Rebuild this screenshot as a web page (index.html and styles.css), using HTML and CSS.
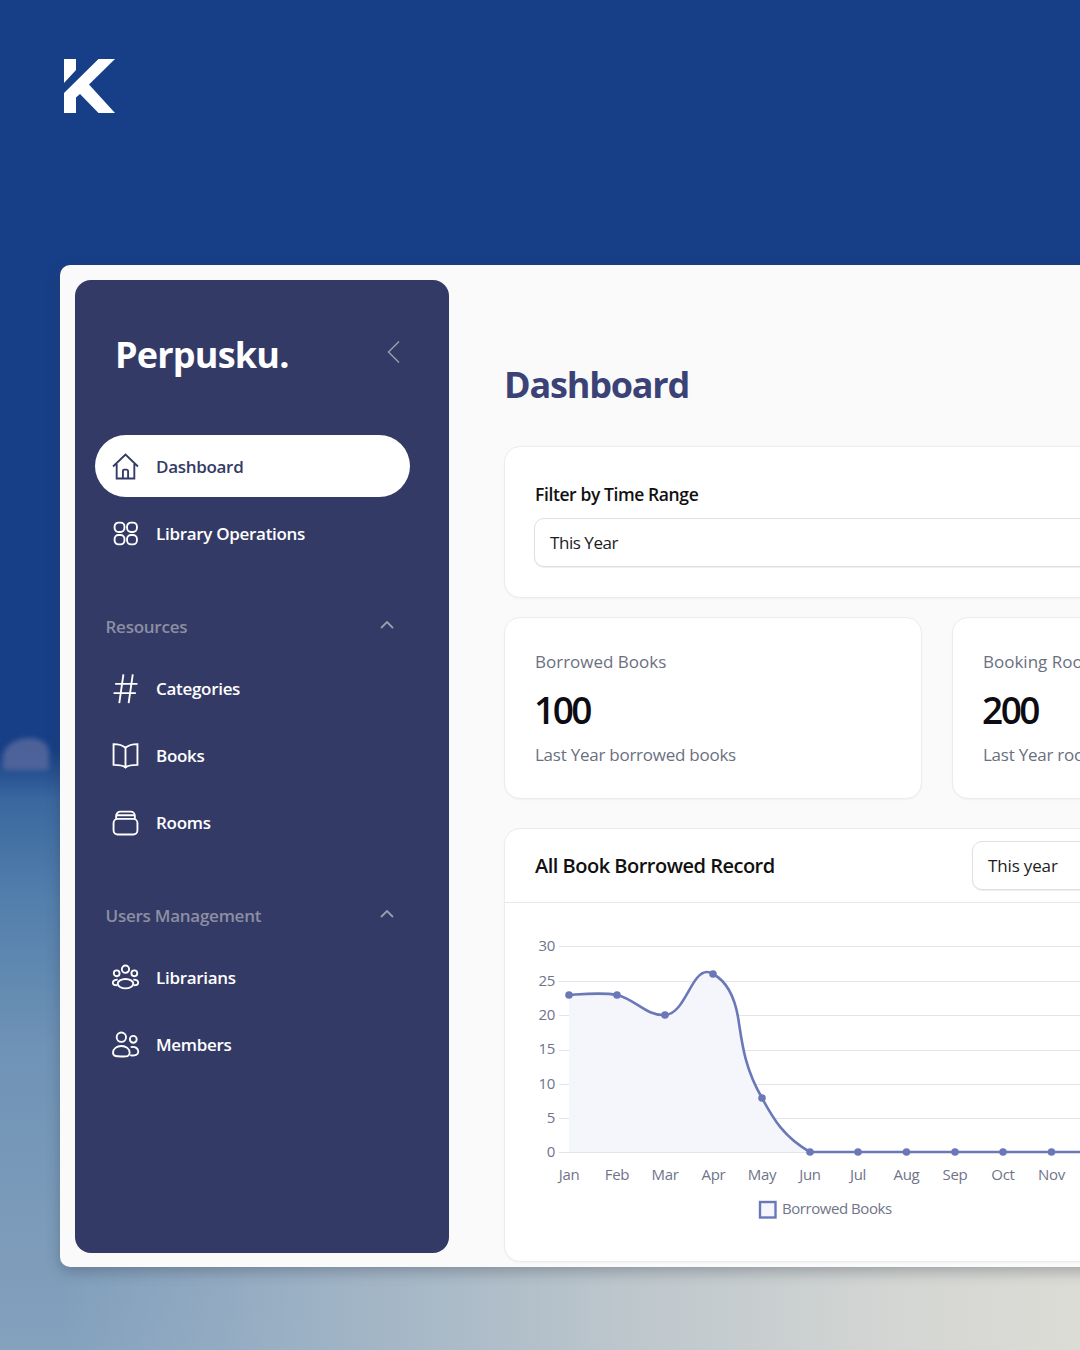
FILE: index.html
```html
<!DOCTYPE html>
<html lang="en">
<head>
<meta charset="utf-8">
<title>Perpusku Dashboard</title>
<link rel="stylesheet" href="styles.css">
</head>
<body>
<div class="stage">
  <div class="blot"></div>
  <div class="cloud"></div>
  <header class="brand">
    <svg class="logo" viewBox="0 0 51 54" aria-hidden="true"><path fill="#fff" d="M0 0H12V11L0 24ZM34.500 0H51L25 25.500 51 54H34.500L16 35 12 38.500V54H0V34Z"/></svg>
  </header>
  <main class="window">
    <aside class="sidebar">
      <div class="side-head">
        <span class="side-title">Perpusku.</span>
        <svg class="collapse" viewBox="0 0 14 24" aria-hidden="true"><path d="M12 1.500 1.500 12 12 22.500"/></svg>
      </div>
      <nav class="nav">
        <a class="nav-item active"><svg class="ico" viewBox="0 0 26 26"><path d="M1 13 13 1.500 25 13M4.500 10.500V24.500H21.500V10.500M10.500 24.500V17.500A1.500 1.500 0 0 1 12 16H14A1.500 1.500 0 0 1 15.500 17.500V24.500"/></svg>Dashboard</a>
        <a class="nav-item"><svg class="ico" viewBox="0 0 26 26"><rect x="2.500" y="2.500" width="9.500" height="9" rx="3.800"/><rect x="14.500" y="2.500" width="9.500" height="9" rx="3.800"/><rect x="2.500" y="14.500" width="9.500" height="9" rx="3.800"/><rect x="14.500" y="14.500" width="9.500" height="9" rx="3.800"/></svg>Library Operations</a>
        <div class="section">
          <span>Resources</span>
          <svg class="chev" viewBox="0 0 14 8"><path d="M1 7 7 1l6 6"/></svg>
        </div>
        <a class="nav-item"><svg class="ico" viewBox="0 0 26 26"><path d="M11 -.500 7 27M20 -.500 16 27M3 8.500H24.500M1.500 17.500H23"/></svg>Categories</a>
        <a class="nav-item"><svg class="ico" viewBox="0 0 26 26"><path d="M13 5.500C10 2.800 6 2 1.500 2V22C6 22 10 22 13 24.500 16 22 20 22 24.500 22V2C20 2 16 2.800 13 5.500ZM13 5.500V24.500"/></svg>Books</a>
        <a class="nav-item"><svg class="ico" viewBox="0 0 26 26"><rect x="1.500" y="9.500" width="23" height="15" rx="4"/><path d="M4 9.500V6.500A4 4 0 0 1 8 2.500H18A4 4 0 0 1 22 6.500V9.500M4.500 6H21.500"/></svg>Rooms</a>
        <div class="section section-users">
          <span>Users Management</span>
          <svg class="chev" viewBox="0 0 14 8"><path d="M1 7 7 1l6 6"/></svg>
        </div>
        <a class="nav-item"><svg class="ico" viewBox="0 0 26 26"><circle cx="13" cy="5" r="3.500"/><circle cx="4.500" cy="9" r="2.800"/><circle cx="21.500" cy="9" r="2.800"/><ellipse cx="13" cy="19" rx="7.500" ry="4.500"/><path d="M5.500 15C2.500 15 .800 16.500.800 18S2.500 20.500 5 20.500M20.500 15C23.500 15 25.200 16.500 25.200 18S23.500 20.500 21 20.500"/></svg>Librarians</a>
        <a class="nav-item"><svg class="ico" viewBox="0 0 26 26"><circle cx="9" cy="6" r="4.500"/><circle cx="20.500" cy="8" r="3.300"/><path d="M1 21C1 17 4.500 14.500 9 14.500S17 17 17 21 13.500 24.500 9 24.500 1 24.500 1 21ZM18 15.500C22.500 14.500 25.300 17 25.300 20S22.500 24 17.500 23.500"/></svg>Members</a>
      </nav>
    </aside>
    <section class="content">
      <h1 class="page-title">Dashboard</h1>
      <div class="card filter">
        <label class="filter-label">Filter by Time Range</label>
        <div class="select select-wide">This Year</div>
      </div>
      <div class="stats">
        <div class="card stat">
          <div class="stat-label">Borrowed Books</div>
          <div class="stat-value">100</div>
          <div class="stat-note">Last Year borrowed books</div>
        </div>
        <div class="card stat">
          <div class="stat-label">Booking Rooms</div>
          <div class="stat-value">200</div>
          <div class="stat-note">Last Year rooms booked</div>
        </div>
      </div>
      <div class="card chart-card">
        <div class="chart-head">
          <h2>All Book Borrowed Record</h2>
          <div class="select select-small">This year</div>
        </div>
        <svg class="chart" viewBox="0 0 620 330" aria-label="Borrowed books chart">
          <g class="grid">
            <path d="M55 14.500H620M55 49.500H620M55 83.500H620M55 118.500H620M55 152.500H620M55 186.500H620M55 220.500H620"/>
          </g>
          <g class="ylab">
            <text x="51" y="19">30</text><text x="51" y="54">25</text><text x="51" y="88">20</text><text x="51" y="122">15</text><text x="51" y="157">10</text><text x="51" y="191">5</text><text x="51" y="225">0</text>
          </g>
          <path class="area" d="M65 63C80 62 98 60 113 63 131 67 142 84 161 83 181 82 187 40 203 40 206 40 207 41 209 42 222 49 230 62 234 85 238 110 240 135 258 166 270 188 280 205 306 220H620V220H65Z"/>
          <path class="line" d="M65 63C80 62 98 60 113 63 131 67 142 84 161 83 181 82 187 40 203 40 206 40 207 41 209 42 222 49 230 62 234 85 238 110 240 135 258 166 270 188 280 205 306 220H620"/>
          <g class="dots">
            <circle cx="65" cy="63" r="3.800"/><circle cx="113" cy="63" r="3.800"/><circle cx="161" cy="83" r="3.800"/><circle cx="209" cy="42" r="3.800"/><circle cx="258" cy="166" r="3.800"/><circle cx="306" cy="220" r="3.800"/><circle cx="354" cy="220" r="3.800"/><circle cx="402.500" cy="220" r="3.800"/><circle cx="451" cy="220" r="3.800"/><circle cx="499" cy="220" r="3.800"/><circle cx="547.500" cy="220" r="3.800"/><circle cx="596" cy="220" r="3.800"/>
          </g>
          <g class="xlab">
            <text x="65" y="248">Jan</text><text x="113" y="248">Feb</text><text x="161" y="248">Mar</text><text x="209.500" y="248">Apr</text><text x="258" y="248">May</text><text x="306" y="248">Jun</text><text x="354" y="248">Jul</text><text x="402.500" y="248">Aug</text><text x="451" y="248">Sep</text><text x="499" y="248">Oct</text><text x="547.500" y="248">Nov</text><text x="596" y="248">Dec</text>
          </g>
          <rect class="legend-box" x="256" y="270" width="15.500" height="15.500"/>
          <text class="legend" x="278" y="282">Borrowed Books</text>
        </svg>
      </div>
    </section>
  </main>
</div>
</body>
</html>
```

FILE: styles.css
```css
* { box-sizing: border-box; }
html, body { margin: 0; padding: 0; }
body { width: 1080px; height: 1350px; overflow: hidden; font-family: "Open Sans", "Noto Sans", sans-serif; }
.stage {
  position: relative;
  width: 1080px;
  height: 1350px;
  overflow: hidden;
  padding: 59px 0 0 64px;
  background: linear-gradient(180deg, #173f87 0, #173f87 750px, #3a689f 800px, #537fac 900px, #6f93b6 1050px, #7f9dbb 1270px, #84a1be 1350px);
}
.blot {
  position: absolute;
  left: 3px;
  top: 738px;
  width: 46px;
  height: 32px;
  background: #56689c;
  border-radius: 70% 50% 10% 10%;
  filter: blur(2.500px);
  opacity: .85;
}
.cloud {
  position: absolute;
  left: 0;
  right: 0;
  top: 1262px;
  height: 88px;
  background: linear-gradient(90deg, rgba(127, 157, 187, 0) 60px, #9db2c5 320px, #bcc6cc 620px, #d4d6d3 900px, #dcdcd6 1080px);
}
.brand { position: relative; height: 206px; }
.logo { display: block; width: 51px; height: 54px; }
.window {
  position: relative;
  display: flex;
  width: 1100px;
  height: 1002px;
  margin-left: -4px;
  padding: 15px 0 14px 15px;
  background: #fafafa;
  border-radius: 10px 0 0 10px;
  box-shadow: 0 5px 14px rgba(50, 55, 70, .32);
}
.sidebar {
  flex: 0 0 374px;
  padding: 52px 39px 0 20px;
  background: #343a66;
  border-radius: 16px;
  color: #fff;
}
.side-head { display: flex; align-items: flex-start; justify-content: space-between; height: 103px; padding: 0 0 0 21px; }
.side-title { font-size: 36px; line-height: 46px; font-weight: 700; letter-spacing: -.8px; margin-left: -1px; }
.collapse { width: 14px; height: 24px; margin: 8px 9px 0 0; fill: none; stroke: #9a9dae; stroke-width: 1.500; }
.nav { display: flex; flex-direction: column; }
.nav-item {
  display: flex;
  align-items: center;
  gap: 17px;
  height: 62px;
  margin-bottom: 5px;
  padding-left: 17px;
  border-radius: 31px;
  font-size: 17px;
  font-weight: 600;
  letter-spacing: -.3px;
  color: #fff;
}
.nav-item.active { background: #fff; color: #343a66; }
.ico { flex: none; width: 27px; height: 27px; fill: none; stroke: currentColor; stroke-width: 1.800; overflow: visible; }
.section {
  display: flex;
  align-items: center;
  justify-content: space-between;
  height: 40px;
  margin: 37px 0 11px;
  padding: 0 16px 0 10.500px;
  font-size: 17px;
  font-weight: 600;
  letter-spacing: -.25px;
  color: #8c8fa3;
}
.section-users { margin: 37px 0 11px; }
.chev { width: 14px; height: 8px; margin-top: -3px; fill: none; stroke: #9a9dae; stroke-width: 1.800; }
.content { flex: 1; min-width: 0; padding: 79px 0 0 55px; }
.page-title { margin: 0 0 35px; font-size: 36px; line-height: 52px; font-weight: 700; letter-spacing: -1.200px; color: #3a4276; }
.card { background: #fff; border: 1px solid #ececf0; border-radius: 16px; box-shadow: 0 1px 2px rgba(0, 0, 0, .04); }
.filter { height: 152px; padding: 33px 30px 0; margin-bottom: 19px; }
.filter-label { display: block; margin-bottom: 10px; font-size: 17.500px; line-height: 28px; font-weight: 600; letter-spacing: -.4px; color: #111; }
.select { display: flex; align-items: center; background: #fff; border: 1px solid #dfe0e4; border-radius: 10px; box-shadow: 0 1px 1px rgba(0, 0, 0, .07); font-size: 17px; letter-spacing: -.15px; color: #1c1c22; }
.select-wide { width: 100%; height: 49px; margin-left: -1px; padding-left: 15px; letter-spacing: -.45px; }
.stats { display: flex; gap: 30px; margin-bottom: 29px; }
.stat { flex: 0 0 418px; height: 182px; padding: 29px 30px 0; overflow: hidden; white-space: nowrap; }
.stat-label { font-size: 17px; line-height: 30px; font-weight: 400; color: #6b7080; }
.stat-value { margin-top: 8px; margin-left: -1px; font-size: 37px; line-height: 50px; font-weight: 600; letter-spacing: -2.500px; color: #0c0c12; }
.stat-note { margin-top: 5px; font-size: 17px; line-height: 30px; letter-spacing: -.25px; color: #6b7080; }
.chart-card { height: 434px; }
.chart-head { display: flex; align-items: center; justify-content: space-between; height: 74px; padding: 0 0 0 30px; border-bottom: 1px solid #e8e8ec; }
.chart-head h2 { margin: 0; font-size: 20px; font-weight: 600; letter-spacing: -.5px; color: #111; }
.select-small { width: 187px; height: 49px; padding-left: 15px; }
.chart { display: block; width: 620px; height: 330px; margin-top: 29px; margin-left: -1px; overflow: visible; font-family: "Open Sans", sans-serif; font-size: 15px; letter-spacing: -.3px; fill: #70748a; }
.grid path { fill: none; stroke: #e4e4e8; stroke-width: 1; }
.ylab text { text-anchor: end; }
.xlab text { text-anchor: middle; }
.area { fill: #f5f6fb; stroke: none; }
.line { fill: none; stroke: #6b78b8; stroke-width: 2.600; }
.dots circle { fill: #6b78b8; }
.legend-box { fill: #f5f6fb; stroke: #6b78b8; stroke-width: 2.400; }
.legend { font-size: 15px; letter-spacing: -.45px; }
```
